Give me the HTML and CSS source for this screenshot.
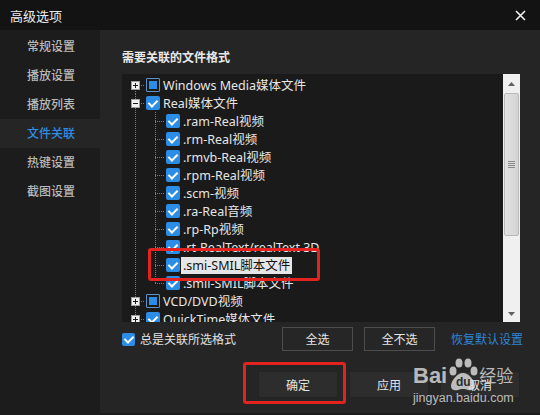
FILE: index.html
```html
<!DOCTYPE html>
<html lang="zh-CN">
<head>
  <meta charset="UTF-8">
  <meta name="viewport" content="width=device-width, initial-scale=1.0">
  <title>高级选项</title>
  <link rel="stylesheet" href="styles.css">
</head>
<body>
  <div class="window">
    <header class="titlebar">
      <span class="title">高级选项</span>
      <button class="close" aria-label="关闭">
        <svg width="11" height="11" viewBox="0 0 11 11"><path d="M1 1L10 10M10 1L1 10" stroke="#f2f2f2" stroke-width="1.6" fill="none"/></svg>
      </button>
    </header>
    <div class="body">
      <nav class="sidebar">
        <a class="nav-item">常规设置</a>
        <a class="nav-item">播放设置</a>
        <a class="nav-item">播放列表</a>
        <a class="nav-item active">文件关联</a>
        <a class="nav-item">热键设置</a>
        <a class="nav-item">截图设置</a>
      </nav>
      <main class="panel">
        <h2 class="panel-title">需要关联的文件格式</h2>
        <div class="filelist">
          <ul class="tree">
            <li class="node">
              <span class="tw first"><svg class="exp" viewBox="0 0 9 9"><rect x="0.5" y="0.5" width="8" height="8" fill="#f2f2f2" stroke="#9c9c9c"/><path d="M2 4.5h5M4.5 2v5" stroke="#1a1a1a"/></svg></span>
              <span class="cb partial"></span>
              <span class="label">Windows Media媒体文件</span>
            </li>
            <li class="node">
              <span class="tw"><svg class="exp" viewBox="0 0 9 9"><rect x="0.5" y="0.5" width="8" height="8" fill="#f2f2f2" stroke="#9c9c9c"/><path d="M2 4.5h5" stroke="#1a1a1a"/></svg></span>
              <span class="cb checked"></span>
              <span class="label">Real媒体文件</span>
            </li>
            <li class="node"><span class="guide"></span><span class="tw"></span><span class="cb checked"></span><span class="label">.ram-Real视频</span></li>
            <li class="node"><span class="guide"></span><span class="tw"></span><span class="cb checked"></span><span class="label">.rm-Real视频</span></li>
            <li class="node"><span class="guide"></span><span class="tw"></span><span class="cb checked"></span><span class="label">.rmvb-Real视频</span></li>
            <li class="node"><span class="guide"></span><span class="tw"></span><span class="cb checked"></span><span class="label">.rpm-Real视频</span></li>
            <li class="node"><span class="guide"></span><span class="tw"></span><span class="cb checked"></span><span class="label">.scm-视频</span></li>
            <li class="node"><span class="guide"></span><span class="tw"></span><span class="cb checked"></span><span class="label">.ra-Real音频</span></li>
            <li class="node"><span class="guide"></span><span class="tw"></span><span class="cb checked"></span><span class="label">.rp-Rp视频</span></li>
            <li class="node"><span class="guide"></span><span class="tw"></span><span class="cb checked"></span><span class="label">.rt-RealText/realText 3D</span></li>
            <li class="node"><span class="guide"></span><span class="tw"></span><span class="cb checked"></span><span class="label selected">.smi-SMIL脚本文件</span></li>
            <li class="node"><span class="guide"></span><span class="tw last"></span><span class="cb checked"></span><span class="label">.smil-SMIL脚本文件</span></li>
            <li class="node">
              <span class="tw"><svg class="exp" viewBox="0 0 9 9"><rect x="0.5" y="0.5" width="8" height="8" fill="#f2f2f2" stroke="#9c9c9c"/><path d="M2 4.5h5M4.5 2v5" stroke="#1a1a1a"/></svg></span>
              <span class="cb partial"></span>
              <span class="label">VCD/DVD视频</span>
            </li>
            <li class="node">
              <span class="tw"><svg class="exp" viewBox="0 0 9 9"><rect x="0.5" y="0.5" width="8" height="8" fill="#f2f2f2" stroke="#9c9c9c"/><path d="M2 4.5h5M4.5 2v5" stroke="#1a1a1a"/></svg></span>
              <span class="cb checked"></span>
              <span class="label">QuickTime媒体文件</span>
            </li>
          </ul>
          <div class="scrollbar">
            <span class="sb-btn"><svg width="7" height="4" viewBox="0 0 7 4"><path d="M0 4L3.5 0L7 4Z" fill="#606060"/></svg></span>
            <span class="sb-thumb"><svg width="7" height="7" viewBox="0 0 7 7"><path d="M0 0.5h7M0 2.5h7M0 4.5h7M0 6.5h7" stroke="#8a8a8a"/></svg></span>
            <span class="sb-track"></span>
            <span class="sb-btn"><svg width="7" height="4" viewBox="0 0 7 4"><path d="M0 0L3.5 4L7 0Z" fill="#606060"/></svg></span>
          </div>
        </div>
        <div class="options">
          <label class="always"><span class="cb checked small"></span>总是关联所选格式</label>
          <button class="btn btn-sm">全选</button>
          <button class="btn btn-sm">全不选</button>
          <a class="reset">恢复默认设置</a>
        </div>
        <div class="actions">
          <button class="btn btn-lg">确定</button>
          <button class="btn btn-lg">应用</button>
          <button class="btn btn-lg">取消</button>
        </div>
      </main>
    </div>

    <!-- 标注框 -->
    <div class="mark mark-item"></div>
    <div class="mark mark-ok"></div>

    <!-- 水印 -->
    <div class="watermark">
      <div class="wm-top">
        <span class="wm-bai">Bai</span>
        <span class="wm-paw">
          <svg width="32" height="34" viewBox="0 0 32 34">
            <ellipse cx="6" cy="13" rx="3.5" ry="4.5" fill="currentColor"/>
            <ellipse cx="12" cy="5" rx="3.5" ry="4.5" fill="currentColor"/>
            <ellipse cx="21" cy="5" rx="3.5" ry="4.5" fill="currentColor"/>
            <ellipse cx="27" cy="13" rx="3.5" ry="4.5" fill="currentColor"/>
            <path d="M16 15c-6 0-12 8-12 13c0 4 4 5 7 4c2-1 3-1 5-1s3 0 5 1c3 1 7 0 7-4c0-5-6-13-12-13z" fill="currentColor"/>
          </svg>
          <span class="wm-du">du</span>
        </span>
        <span class="wm-jy">经验</span>
      </div>
      <div class="wm-url">jingyan.baidu.com</div>
    </div>
  </div>
</body>
</html>
```

FILE: styles.css
```css
* {
  box-sizing: border-box;
}
body {
  margin: 0;
  background: #1b1b1b;
  font-family: 'Noto Sans', 'Noto Sans CJK SC', sans-serif;
  font-size: 12px;
  color: #e6e6e6;
}
.window {
  position: relative;
  width: 540px;
  height: 415px;
  display: flex;
  flex-direction: column;
  overflow: hidden;
}
.titlebar {
  height: 30px;
  flex-shrink: 0;
  background: #131313;
  display: flex;
  align-items: center;
  justify-content: space-between;
  padding: 0 14px 0 10px;
}
.title {
  font-size: 13px;
  color: #ececec;
}
.close {
  background: none;
  border: none;
  padding: 0;
  width: 11px;
  height: 11px;
  display: flex;
}
.body {
  flex: 1;
  display: flex;
}
.sidebar {
  width: 100px;
  flex-shrink: 0;
  background: #1c1c1c;
  padding-top: 2px;
  display: flex;
  flex-direction: column;
}
.nav-item {
  height: 29px;
  line-height: 29px;
  padding-left: 27px;
  color: #b9b9b9;
  font-weight: 500;
  font-size: 12px;
}
.nav-item.active {
  background: #252525;
  color: #2e8ee6;
}
.panel {
  flex: 1;
  background: #252525;
  padding: 19px 20px 0 22px;
  height: 383px;
  display: flex;
  flex-direction: column;
}
.panel-title {
  margin: 0 0 7px 0;
  font-size: 12px;
  line-height: 18px;
  font-weight: bold;
  color: #e8e8e8;
}
.filelist {
  height: 248px;
  display: flex;
  background: #1a1a1a;
}
.tree {
  flex: 1;
  list-style: none;
  margin: 0;
  padding: 2px 0 0 3px;
  overflow: hidden;
}
.node {
  height: 18px;
  display: flex;
  align-items: center;
  white-space: nowrap;
}
.guide,
.tw {
  width: 20px;
  height: 18px;
  flex-shrink: 0;
  display: flex;
  align-items: center;
  justify-content: center;
}
.guide {
  background: repeating-linear-gradient(#7a7a7a 0 1px, transparent 1px 2px) 10px 0 / 1px 100% no-repeat;
}
.tw {
  background:
    repeating-linear-gradient(#7a7a7a 0 1px, transparent 1px 2px) 10px 0 / 1px 100% no-repeat,
    repeating-linear-gradient(90deg, #7a7a7a 0 1px, transparent 1px 2px) 10px 9px / 10px 1px no-repeat;
}
.tw.first {
  background:
    repeating-linear-gradient(#7a7a7a 0 1px, transparent 1px 2px) 10px 9px / 1px 9px no-repeat,
    repeating-linear-gradient(90deg, #7a7a7a 0 1px, transparent 1px 2px) 10px 9px / 10px 1px no-repeat;
}
.tw.last {
  background:
    repeating-linear-gradient(#7a7a7a 0 1px, transparent 1px 2px) 10px 0 / 1px 10px no-repeat,
    repeating-linear-gradient(90deg, #7a7a7a 0 1px, transparent 1px 2px) 10px 9px / 10px 1px no-repeat;
}
.exp {
  width: 9px;
  height: 9px;
  margin-left: 1px;
}
.cb {
  width: 14px;
  height: 14px;
  flex-shrink: 0;
  margin-left: 1px;
  border-radius: 2px;
  display: flex;
  align-items: center;
  justify-content: center;
}
.cb.checked {
  background: #2b8de6;
}
.cb.checked::after {
  content: '';
  width: 4px;
  height: 7px;
  border-right: 2px solid #fff;
  border-bottom: 2px solid #fff;
  transform: rotate(45deg);
  margin-top: -2px;
}
.cb.partial {
  border: 1px solid #5a94c8;
  border-radius: 1px;
  padding: 2px;
  background: #1a1a1a;
}
.cb.partial::after {
  content: '';
  width: 8px;
  height: 8px;
  background: #2b8de6;
}
.label {
  margin-left: 1px;
  padding: 0 2px;
  font-size: 12.5px;
  line-height: 17px;
  color: #e6e6e6;
}
.label.selected {
  background: #e6e6e6;
  color: #111;
}
.scrollbar {
  width: 17px;
  flex-shrink: 0;
  background: #f0f0f0;
  display: flex;
  flex-direction: column;
  align-items: center;
  padding-top: 1px;
}
.sb-btn {
  height: 17px;
  width: 100%;
  display: flex;
  align-items: center;
  justify-content: center;
}
.sb-thumb {
  width: 15px;
  height: 143px;
  margin-top: 1px;
  border: 1px solid #b9b9b9;
  border-radius: 2px;
  background: linear-gradient(90deg, #e2e2e2, #d4d4d4);
  display: flex;
  align-items: center;
  justify-content: center;
}
.sb-track {
  flex: 1;
}
.options {
  margin-top: 5px;
  height: 24px;
  display: flex;
  align-items: center;
}
.always {
  display: flex;
  align-items: center;
  gap: 5px;
  color: #e2e2e2;
  margin-right: auto;
}
.cb.small {
  width: 13px;
  height: 13px;
  margin-left: 0;
}
.btn {
  font-family: inherit;
  font-size: 12px;
  color: #e6e6e6;
  padding: 0;
}
.btn-sm {
  width: 71px;
  height: 24px;
  margin-left: 11px;
  background: #262626;
  border: 1px solid #4d4d4d;
}
.reset {
  margin-left: 16px;
  margin-right: -3px;
  color: #2f84d6;
}
.actions {
  margin-top: 20px;
  display: flex;
  justify-content: flex-end;
  gap: 11px;
}
.btn-lg {
  width: 80px;
  height: 27px;
  background: #2d2d2d;
  border: 1px solid #232323;
}
.mark {
  position: absolute;
  border: 3px solid #e3231f;
  border-radius: 3px;
}
.mark-item {
  left: 148px;
  top: 248px;
  width: 172px;
  height: 33px;
}
.mark-ok {
  left: 243px;
  top: 362px;
  width: 103px;
  height: 42px;
}
.watermark {
  position: absolute;
  left: 413px;
  top: 356px;
  color: rgba(225, 225, 225, 0.8);
  font-family: 'Liberation Sans', 'Noto Sans CJK SC', sans-serif;
}
.wm-top {
  display: flex;
  align-items: flex-end;
  height: 33px;
}
.wm-bai {
  font-size: 22px;
  font-weight: bold;
  line-height: 22px;
  margin-bottom: 2px;
}
.wm-paw {
  width: 32px;
  height: 34px;
  display: flex;
  flex-direction: column;
  align-items: center;
  margin-bottom: -3px;
}
.wm-paw svg {
  color: rgba(225, 225, 225, 0.8);
}
.wm-du {
  margin-top: -17px;
  font-size: 12px;
  font-weight: bold;
  color: #2d2d2d;
}
.wm-jy {
  font-size: 17px;
  line-height: 20px;
  margin-bottom: 2px;
}
.wm-url {
  font-size: 12.5px;
  line-height: 14px;
  margin-top: 2px;
}
```
